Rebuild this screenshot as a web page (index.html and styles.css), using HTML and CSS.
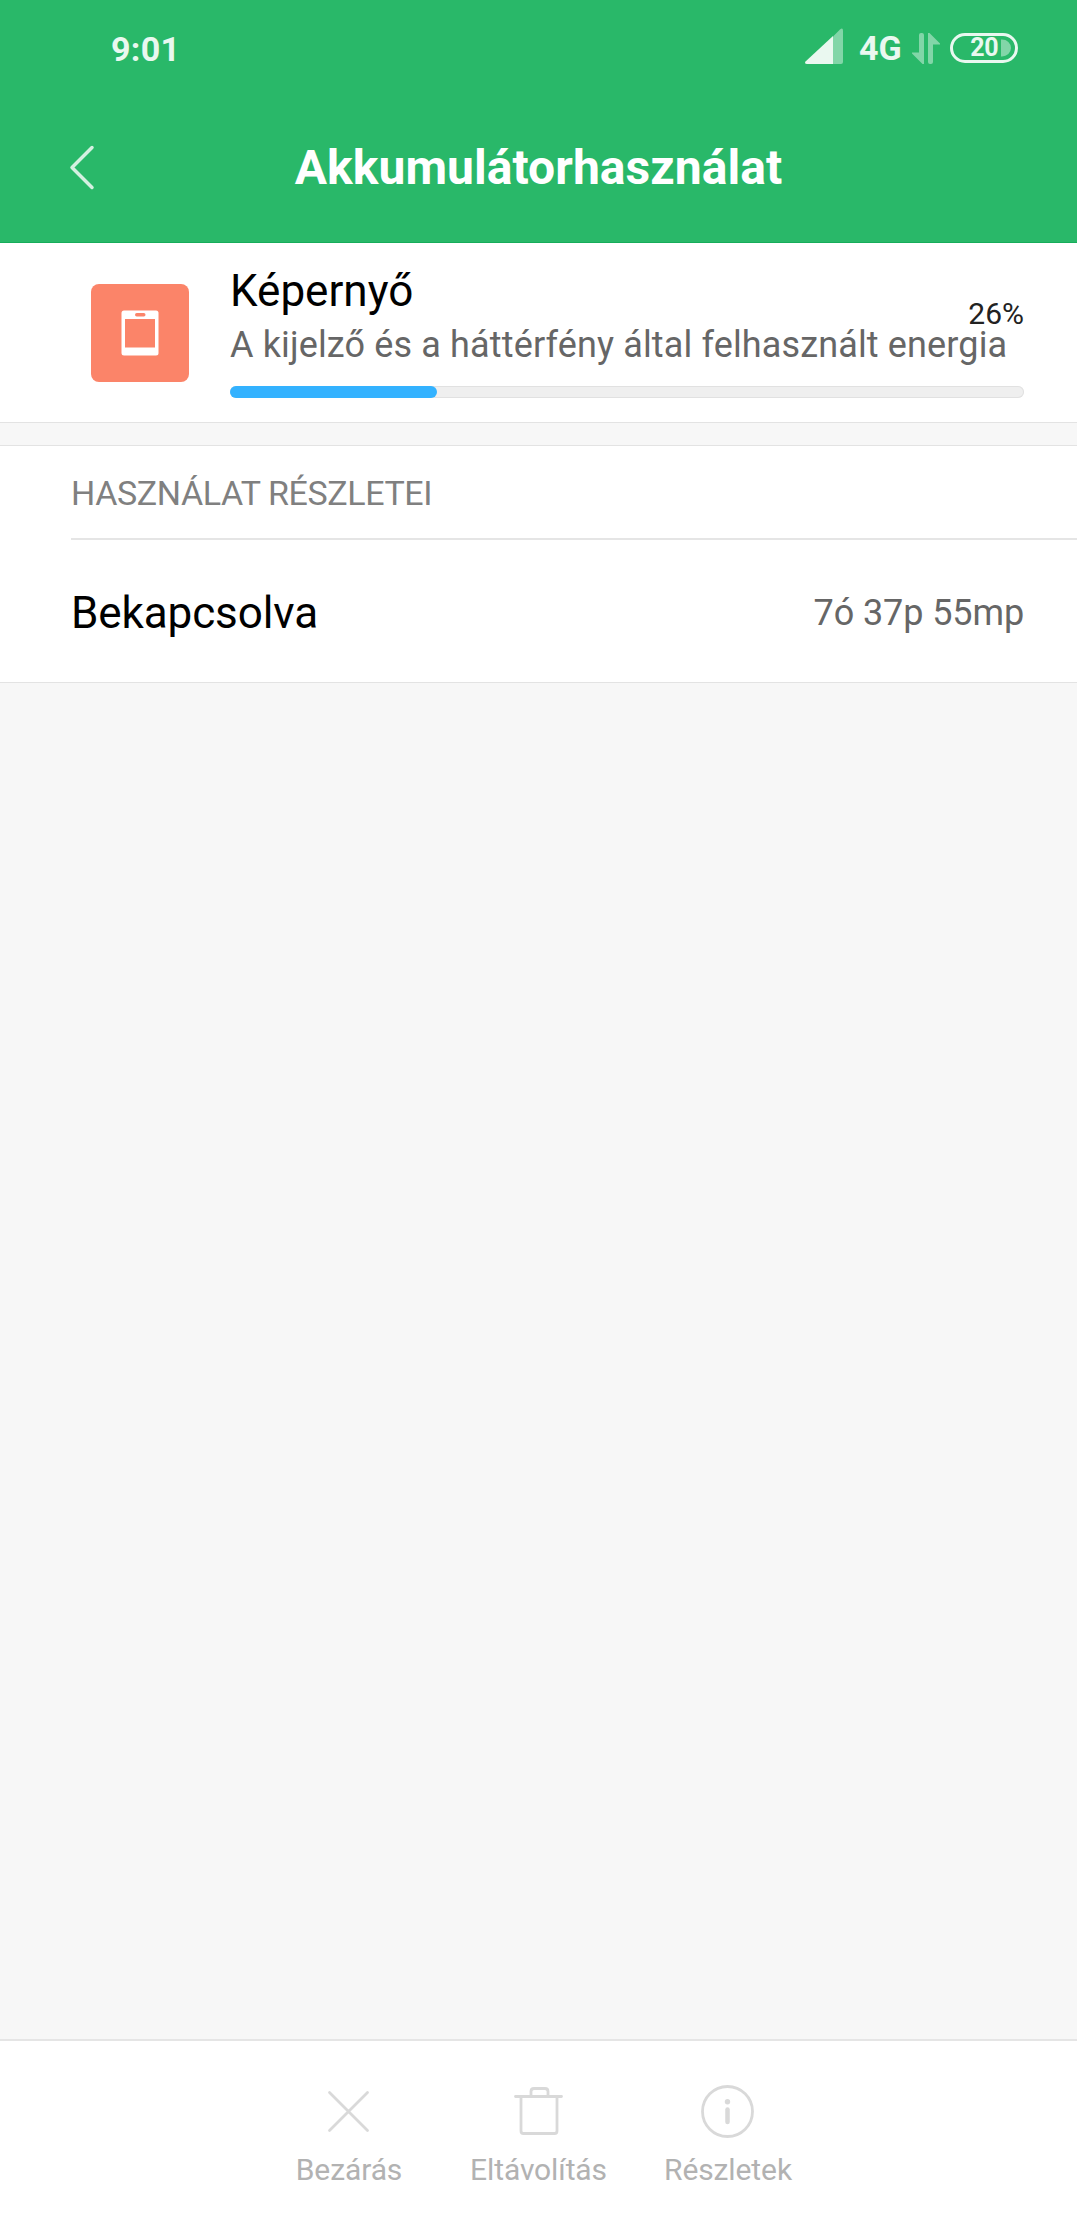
FILE: index.html
```html
<!DOCTYPE html>
<html lang="hu">
<head>
  <meta charset="UTF-8">
  <meta name="viewport" content="width=device-width, initial-scale=1.0">
  <title>Akkumulátorhasználat</title>
  <link rel="stylesheet" href="styles.css">
</head>
<body>
  <header>
    <div class="status-bar">
      <span class="time">9:01</span>
      <div class="status-icons">
        <svg class="signal" width="40" height="40" viewBox="0 0 40 40">
          <path d="M29 10.5 36 3.5Q39 1 39 5V36Q39 38 37 38H29Z" fill="#fff" fill-opacity=".42"/>
          <path d="M29 10V38H3Q0 37.500 1.500 35.500Z" fill="#fff" fill-opacity=".9"/>
        </svg>
        <span class="network">4G</span>
        <svg class="data" width="30" height="34" viewBox="0 0 30 34" fill="#fff" fill-opacity=".42">
          <path d="M8 4Q8 2 10 2H11Q13 2 13 4V33H11.500L1 22.500V21.500H8Z"/>
          <path d="M17 2H18.500L29 12.500V13.500H22V31Q22 33 20 33H19Q17 33 17 31Z"/>
        </svg>
        <div class="battery">
          <span>20</span>
          <svg width="12" height="20" viewBox="0 0 12 20"><path d="M1 1.500H2A9 8.500 0 0 1 2 18.500H1Z" fill="#fff" fill-opacity=".42"/></svg>
        </div>
      </div>
    </div>
    <div class="title-bar">
      <svg class="back" width="30" height="50" viewBox="0 0 30 50" fill="none" stroke="#d4f0e1" stroke-width="3.500" stroke-linecap="round" stroke-linejoin="round">
        <path d="M24 4.500 4 24.500 24 44.500"/>
      </svg>
      <h1>Akkumulátorhasználat</h1>
    </div>
  </header>

  <main>
    <section class="summary">
      <div class="app-icon">
        <svg width="38" height="46" viewBox="0 0 38 46">
          <rect x=".5" y=".5" width="37" height="45" rx="2.500" fill="#fff"/>
          <rect x="4" y="9" width="30" height="28.500" fill="#fb8469"/>
          <rect x="14" y="3" width="10.500" height="3.500" rx="1.700" fill="#fb8469"/>
        </svg>
      </div>
      <div class="summary-info">
        <h2>Képernyő</h2>
        <p>A kijelző és a háttérfény által felhasznált energia</p>
        <span class="percent">26%</span>
        <div class="progress"><div class="progress-fill" style="width: 26.1%"></div></div>
      </div>
    </section>

    <section class="details">
      <h3>HASZNÁLAT RÉSZLETEI</h3>
      <div class="row">
        <span class="row-name">Bekapcsolva</span>
        <span class="row-value">7ó 37p 55mp</span>
      </div>
    </section>
  </main>

  <footer>
    <div class="action">
      <svg width="64" height="64" viewBox="0 0 64 64">
        <path d="M12.500 12.500 50.500 50.500M50.500 12.500 12.500 50.500"/>
      </svg>
      <span>Bezárás</span>
    </div>
    <div class="action">
      <svg width="64" height="64" viewBox="0 0 64 64">
        <path d="M8.500 16.500H54.500M14 16.500V51Q14 53.500 16.500 53.500H47.500Q50 53.500 50 51V16.500M24 16.500V11.500Q24 8.500 27 8.500H38Q41 8.500 41 11.500V16.500"/>
      </svg>
      <span>Eltávolítás</span>
    </div>
    <div class="action">
      <svg width="64" height="64" viewBox="0 0 64 64">
        <circle cx="31.500" cy="31.500" r="25"/>
        <circle class="dot" cx="31.500" cy="21.800" r="2.700"/>
        <path class="stem" d="M31.500 29.500V42"/>
      </svg>
      <span>Részletek</span>
    </div>
  </footer>
</body>
</html>
```
FILE: styles.css
```css
* { box-sizing: border-box; margin: 0; padding: 0; }
body { display: flex; flex-direction: column; min-height: 2240px; font-family: Roboto, sans-serif; background: #f7f7f7; color: #000; }
svg { display: block; flex: none; }

header { height: 243px; background: #29b869; border-bottom: 1px solid #16ad5a; color: #fff; }
.status-bar { display: flex; justify-content: space-between; height: 98px; padding: 0 59px 0 111px; }
.time, .network { font-size: 34px; font-weight: 700; line-height: 98px; color: #e9f8f0; }
.time { letter-spacing: 0.3px; }
.status-icons { display: flex; align-items: center; height: 96px; }
.signal { margin: -4px 15px 0 0; }
.network { width: 42px; line-height: 96px; margin-right: 10px; }
.data { margin-right: 9px; }
.battery { display: flex; align-items: center; justify-content: flex-end; width: 68px; height: 30px; padding-right: 3px; border: 3px solid #e9f8f0; border-radius: 15px; }
.battery span { font-size: 25px; font-weight: 700; line-height: 26px; color: #e9f8f0; margin-right: 2px; letter-spacing: -0.5px; }
.title-bar { display: grid; grid-template-columns: 100px 1fr 100px; align-items: center; height: 139px; padding: 0 68px; }
h1 { font-size: 48px; font-weight: 700; line-height: 60px; text-align: center; white-space: nowrap; letter-spacing: 0.05px; }

.summary { display: flex; height: 180px; padding: 22px 53px 0 90px; background: #fff; border-bottom: 1px solid #e3e3e3; }
.app-icon { display: flex; align-items: center; justify-content: center; width: 98px; height: 98px; margin: 19px 41px 0 1px; border-radius: 8px; background: #fb8469; }
.summary-info { position: relative; flex: 1; }
h2 { font-size: 44px; font-weight: 400; line-height: 52px; }
.summary p { font-size: 36px; line-height: 42px; margin-top: 7px; color: #666; white-space: nowrap; letter-spacing: 0.14px; }
.percent { position: absolute; top: 31px; right: 0; font-size: 30px; line-height: 36px; color: #222; }
.progress { height: 12px; margin-top: 20px; border-radius: 6px; background: #efefef; box-shadow: inset 0 0 0 1px #e1e1e1; }
.progress-fill { height: 12px; border-radius: 6px; background: #33b2ff; }

.details { margin-top: 22px; padding-left: 71px; background: #fff; border-top: 1px solid #e3e3e3; border-bottom: 1px solid #e3e3e3; }
h3 { height: 94px; border-bottom: 2px solid #e5e5e5; font-size: 34px; font-weight: 400; line-height: 94px; color: #808080; letter-spacing: -0.38px; }
.row { display: flex; justify-content: space-between; height: 142px; padding-right: 53px; line-height: 147px; }
.row-name { font-size: 44px; letter-spacing: -0.1px; }
.row-value { font-size: 36px; color: #666; letter-spacing: -0.1px; }

footer { display: flex; justify-content: center; height: 201px; margin-top: auto; padding-top: 39px; background: #fff; border-top: 2px solid #e5e5e5; }
.action { display: flex; flex-direction: column; align-items: center; width: 189.5px; font-size: 30px; line-height: 36px; color: #b2b2b2; letter-spacing: -0.1px; }
.action svg { margin-bottom: 8px; fill: none; stroke: #d9d9d9; stroke-width: 2.8; stroke-linecap: round; }
.action .dot { fill: #d9d9d9; stroke: none; }
.action .stem { stroke-width: 4.5; }
```
